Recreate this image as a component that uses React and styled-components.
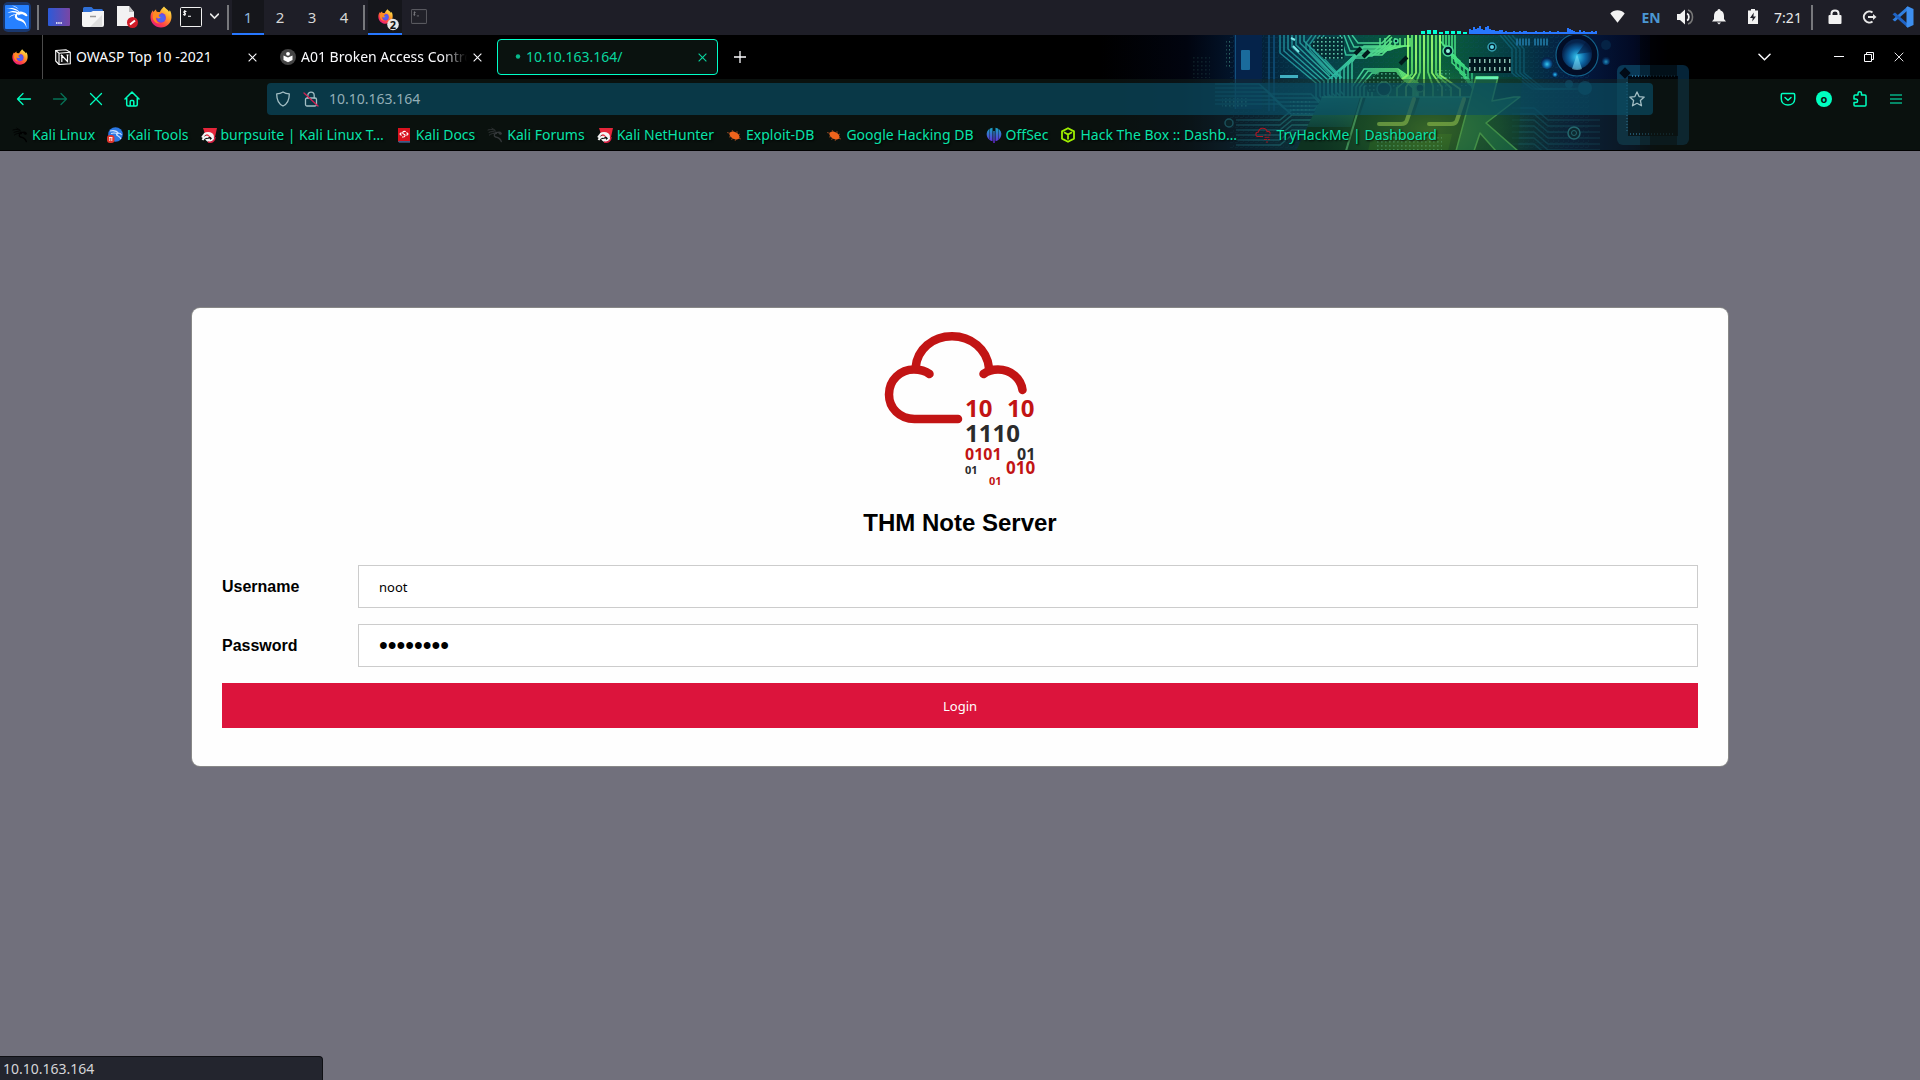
import React from "react";
import styled, { createGlobalStyle, css } from "styled-components";

const GlobalStyle = createGlobalStyle`
  *, *::before, *::after { box-sizing: border-box; }
  body { margin: 0; background: #71707c; font-family: "Noto Sans", sans-serif; }
  button, input { font: inherit; }
  a { color: inherit; text-decoration: none; }
`;

const uiText = css`
  font-size: 14px;
  line-height: 20px;
  white-space: nowrap;
`;

const Desktop = styled.div`
  min-height: 100vh;
  display: flex;
  flex-direction: column;
`;

/* ---------- system panel ---------- */

const Panel = styled.div`
  height: 35px;
  display: flex;
  justify-content: space-between;
  background: #1e1e27;
  color: #e8e8e8;
`;

const PanelGroup = styled.div`
  display: flex;
  align-items: stretch;
`;

const PanelCell = styled.button`
  ${uiText}
  width: ${(p) => p.$width || 26}px;
  padding: 0;
  border: 0;
  border-bottom: 2px solid ${(p) => (p.$active ? "#2777ff" : "transparent")};
  background: ${(p) => (p.$active ? "#15161b" : "transparent")};
  color: inherit;
  display: flex;
  align-items: center;
  justify-content: center;
`;

const WorkspaceCell = styled(PanelCell)`
  font-size: 15px;
  color: ${(p) => (p.$active ? "#8fb6dc" : "#d6d6d6")};
`;

const Separator = styled.span`
  width: 2px;
  margin: 5px ${(p) => p.$gap || 3}px;
  background: #77787c;
`;

const Language = styled.span`
  ${uiText}
  width: 34px;
  align-self: center;
  text-align: center;
  font-weight: 700;
  color: #4b97d2;
`;

const Clock = styled.time`
  ${uiText}
  width: 36px;
  align-self: center;
  display: flex;
  justify-content: center;
`;

const Graph = styled.svg`
  align-self: flex-end;
  margin: 0 3px 1px 0;
`;

/* ---------- browser chrome ---------- */

const Chrome = styled.header`
  position: relative;
  background: #000;
  border-bottom: 1px solid #000;
  overflow: hidden;
`;

const Artwork = styled.svg`
  position: absolute;
  top: 0;
  right: 200px;
`;

const TabBar = styled.div`
  position: relative;
  height: 44px;
  display: flex;
  align-items: center;
`;

const PinnedTab = styled.button`
  width: 43px;
  height: 44px;
  padding: 0 3px 0 0;
  margin-right: 4px;
  border: 0;
  border-right: 1px solid #4b4b4b;
  background: transparent;
  display: grid;
  place-items: center;
`;

const Tab = styled.div`
  ${uiText}
  width: 221px;
  height: 36px;
  margin-right: 4px;
  padding: 0 10px 0 7px;
  border: 1px solid ${(p) => (p.$active ? "#00ffc8" : "transparent")};
  border-radius: 4px;
  background: ${(p) => (p.$active ? "#0a120f" : "transparent")};
  color: ${(p) => (p.$active ? "#09d69f" : "#fbfbfe")};
  display: flex;
  align-items: center;
  gap: 5px;
`;

const TabTitle = styled.span`
  flex: 1;
  min-width: 0;
  overflow: hidden;
  ${(p) => p.$fade && css`mask-image: linear-gradient(90deg, #000 85%, transparent);`}
`;

const GlyphButton = styled.button`
  flex: none;
  width: ${(p) => p.$size || 36}px;
  height: ${(p) => p.$size || 36}px;
  padding: 0;
  border: 0;
  background: transparent;
  color: ${(p) => p.$color || "inherit"};
  opacity: ${(p) => (p.disabled ? 0.4 : 1)};
  display: grid;
  place-items: center;
`;

const TabClose = styled(GlyphButton)`
  width: 10px;
  height: 20px;
`;

const WindowButtons = styled.div`
  margin-left: auto;
  padding-right: 6px;
  display: flex;
  align-items: center;
  color: #fbfbfe;
`;

const WindowButton = styled(GlyphButton)`
  width: 30px;
  margin-left: ${(p) => (p.$apart ? 45 : 0)}px;
`;

const Toolbar = styled.div`
  position: relative;
  height: 40px;
  padding: 0 6px;
  display: flex;
  align-items: center;
  background: rgba(25, 43, 35, 0.4);
  color: #00ffc0;
`;

const AddressBar = styled.div`
  flex: 1;
  height: 32px;
  margin: 0 117px;
  padding: 0 7px 0 2px;
  border-radius: 4px;
  background: rgba(10, 78, 104, 0.64);
  color: #a3bec4;
  display: flex;
  align-items: center;
`;

const AddressInput = styled.input`
  ${uiText}
  flex: 1;
  min-width: 0;
  margin-left: 4px;
  padding: 0;
  border: 0;
  outline: 0;
  background: transparent;
  color: #93aeb6;
`;

const AddressIcon = styled.span`
  width: 28px;
  display: flex;
  justify-content: center;
`;

const Bookmarks = styled.nav`
  position: relative;
  height: 31px;
  padding: 0 12px;
  display: flex;
  align-items: center;
  gap: 12px;
  background: rgba(25, 43, 35, 0.4);
`;

const Bookmark = styled.a`
  ${uiText}
  min-width: ${(p) => p.$min || 0}px;
  display: flex;
  align-items: center;
  gap: 4px;
  color: #09e3a9;
  text-shadow: 1px 1px 2px #000;

  svg { flex: none; }
`;

/* ---------- page ---------- */

const Page = styled.main`
  flex: 1;
  padding: 157px 0;
`;

const Card = styled.section`
  width: 80%;
  margin: 0 auto;
  padding: 23px 30px 38px;
  border-radius: 8px;
  box-shadow: 0 0 0 1px #888;
  background: #fefefe;
  font-family: "Liberation Sans", Arial, sans-serif;
  display: flex;
  flex-direction: column;
  align-items: center;
`;

const Title = styled.h1`
  margin: 21px 0 28px;
  font-size: 24px;
  line-height: 28px;
  font-weight: 700;
  color: #000;
`;

const Form = styled.form`
  width: 100%;
  display: grid;
  gap: 16px;
`;

const Field = styled.div`
  display: grid;
  grid-template-columns: 136px 1fr;
  align-items: center;
`;

const Label = styled.label`
  font-size: 16px;
  line-height: 20px;
  font-weight: 700;
  color: #000;
`;

const TextInput = styled.input`
  width: 100%;
  height: 43px;
  padding: 0 20px;
  border: 1px solid #ccc;
  background: #fff;
  color: #000;
  font-family: "Noto Sans", sans-serif;
  font-size: 13px;
`;

const PasswordInput = styled(TextInput)`
  font-family: "Liberation Sans", sans-serif;
  font-size: 25px;
`;

const LoginButton = styled.button`
  height: 45px;
  padding: 0;
  border: 0;
  background: #dc143c;
  color: #fff;
  font-family: "Noto Sans", sans-serif;
  font-size: 13px;
`;

const StatusBar = styled.div`
  ${uiText}
  position: fixed;
  left: 0;
  bottom: 0;
  width: 323px;
  height: 24px;
  padding: 2px 3px;
  border: 1px solid #0f1014;
  border-width: 1px 1px 0 0;
  border-top-right-radius: 4px;
  background: #23252e;
  color: #d5d5d8;
`;

/* ---------- drawings ---------- */

const Firefox = ({ size }) => (
  <svg width={size} height={size} viewBox="0 0 22 22" aria-hidden="true">
    <defs>
      <linearGradient id="ffBody" x1="0.85" y1="0.1" x2="0.2" y2="1">
        <stop offset="0" stopColor="#ffe14a" />
        <stop offset="0.35" stopColor="#ff9a2a" />
        <stop offset="0.7" stopColor="#ff4146" />
        <stop offset="1" stopColor="#e31587" />
      </linearGradient>
    </defs>
    <path d="M14 .5c1 2 4 3.200 5 5.200.6-.3.7-1 .6-1.600 1.500 2 2 4.500 1.900 7.200C21.300 17 16.800 21.500 11 21.500S.5 17 .5 11.200c0-3 1-5.200 2.400-6.900 0 .8.2 1.300.5 1.700.8-1.200 2-2.200 2.700-2.500-.1 1 .2 2 .8 2.600 1-.3 2-.2 2.900.1C10.600 4 12.500 2 14 .5z" fill="url(#ffBody)" />
    <circle cx="11" cy="11.800" r="4.900" fill="#7542e5" />
    <circle cx="11.300" cy="12.200" r="3.600" fill="#5064f0" />
    <path d="M3.500 6c2-.8 3.800-.6 5.300.6h3c-.3 1.400-2.600 1.700-3 2.700 0 1.500 1 2 2.200 1.800-1 2-4.500 1.500-5 .2-.4 3 1.500 5.600 4.500 5.900C7 18 3 15.500 2.600 11z" fill="#ff8a22" />
  </svg>
);

const Dragon = ({ size, color }) => (
  <svg width={size} height={size} viewBox="0 0 24 24" fill="none" stroke={color} strokeLinecap="round" aria-hidden="true">
    <path d="M1.500 4.500C7 2.500 12 4 15 8.500M3 8c4-2 8-1.500 11 1M3.500 12c3-2.500 7-3 10-2" strokeWidth="1.300" />
    <path d="M14 8.500c3-1.200 5 0 6.500 2.500M17 8c2-1 4 .5 4.500 2l-3 .2" strokeWidth="1.800" />
    <path d="M14 9.500c-4 .5-4 4.500-1 5.500 4 .8 7 1.500 8.500 7" strokeWidth="2" />
    <path d="M7 1.500l5 3" strokeWidth="1" />
  </svg>
);

const KaliMenu = () => (
  <svg width="28" height="30" viewBox="0 0 28 30" aria-hidden="true">
    <rect width="28" height="30" rx="5" fill="#174aa0" opacity=".6" />
    <rect x="2" y="3" width="24" height="24" rx="1" fill="#2680ff" />
    <g fill="#fff">
      <path d="M3 6.500C9 5 15 6.500 17.500 11.500c-3-3-8-5-14.500-5z" />
      <path d="M4.500 11C9 8 14 8.500 17 11.500l-1.500 1C12.500 10 9 9.800 4.500 11z" />
      <path d="M5.500 16c2-3 5.500-4.200 9-3.500-3 .3-6 1.300-9 3.500z" />
      <path d="M15 10.500c2-1.500 4-1 5.500-.2 2 .3 3.500 1.700 4 3.700l-1.500.3-2.500-1.500c-2-.8-3.500-.5-5 .7z" />
      <path d="M16 11.500c-3 1.200-2.500 4 .5 4.800 4.500 1.200 7 4 7 9.700-1.200-4.500-3-6.500-8-7.500-4.500-1.500-5-6.500-.5-8z" />
      <path d="M9 3.500c3 .5 5 1.500 6.500 3.500C13 5.500 11 4.500 9 3.500z" />
    </g>
  </svg>
);

const Terminal = ({ small }) => (
  <svg width={small ? 16 : 22} height={small ? 15 : 20} viewBox="0 0 22 20" opacity={small ? 0.42 : 1} aria-hidden="true">
    <rect x=".5" y=".5" width="21" height="19" rx="1" fill={small ? "#26272d" : "#16171c"} stroke="#f1f1f1" />
    <path d="M6.500 4.500C4 3.700 3 5.300 4.500 6S6 8.200 3 7.500M4.800 3v6M8 9.200h3" fill="none" stroke="#fff" strokeWidth="1.100" />
  </svg>
);

const Cross = ({ size = 10, thin }) => (
  <svg width={size} height={size} viewBox="0 0 10 10" aria-hidden="true">
    <path d="M.7.7l8.600 8.600M9.300.7L.7 9.300" stroke="currentColor" strokeWidth={thin ? 0.9 : 1.2} fill="none" />
  </svg>
);

const Chevron = ({ width = 12, weight = 1.5 }) => (
  <svg width={width} height={width / 2 + 2} viewBox="0 0 12 8" fill="none" stroke="currentColor" strokeWidth={weight} aria-hidden="true">
    <path d="M.8 1.200L6 6.400l5.200-5.200" strokeLinecap="round" />
  </svg>
);

const Stroke = ({ children, size = 16, weight = 1.3 }) => (
  <svg width={size} height={size} viewBox="0 0 16 16" fill="none" stroke="currentColor" strokeWidth={weight} strokeLinecap="round" strokeLinejoin="round" aria-hidden="true">
    {children}
  </svg>
);

const NetHunterMark = () => (
  <svg width="16" height="16" viewBox="0 0 16 16" aria-hidden="true">
    <path d="M2 1h14l-2 9H5z" fill="#e5263a" />
    <path d="M13.500 12.500L8 7c-3-2-5 .5-7 3.500M3 7c4-2 9-1 9 3s-4 5-6 3l3-.5M1.500 13c1-2 3-4 6-3" fill="none" stroke="#f4f4f4" strokeWidth="1.900" />
    <path d="M7 15c4 1 7-1 7-5" fill="none" stroke="#d81f42" strokeWidth="1.500" />
  </svg>
);

const Beetle = () => (
  <svg width="16" height="16" viewBox="0 0 16 16" aria-hidden="true">
    <path d="M1 5.500l4 1M3 10l3-.5M6 3l2 3M5 12.500l3-1.500M11 4l0 3M9 14l1-2M14 7l-2 1M15 12l-3-1" stroke="#80421e" strokeWidth="1" />
    <ellipse cx="8.500" cy="8.500" rx="5.500" ry="3.400" transform="rotate(28 8.500 8.500)" fill="#f0641c" />
  </svg>
);

const KaliToolsMark = () => (
  <svg width="16" height="16" viewBox="0 0 16 16" aria-hidden="true">
    <circle cx="8.500" cy="7.500" r="7.300" fill="#2b78e4" />
    <path d="M3 4c4-1 7 0 8.500 2.500M4 6.500c3-1 5-.5 7 .5M11 6.500c1.500-.5 3 .5 3.500 1.500M10 7c-2 1.500 3 1.500 4 5" stroke="#cfe2ff" fill="none" strokeWidth="1.100" />
    <rect y="8" width="7.500" height="8" rx="3" fill="#e1352c" />
    <path d="M2 10.500h3.500M2.800 11v3M4.800 11v3" stroke="#fff" strokeWidth=".9" />
  </svg>
);

const DocsMark = () => (
  <svg width="16" height="16" viewBox="0 0 16 16" aria-hidden="true">
    <path d="M2 1h12v14H2z" fill="#d8121e" />
    <path d="M2 14h12v1.800H3z" fill="#3f5c88" />
    <path d="M5.500 5.500L4 7l1.500 1.500M10.500 5.500L12 7l-1.500 1.500M9.800 4.500C6 3.800 6 6.800 8 7.200s1 3.300-2 2.800" stroke="#fff" fill="none" strokeWidth="1.100" />
  </svg>
);

const OffSecMark = () => (
  <svg width="16" height="16" viewBox="0 0 16 16" aria-hidden="true">
    <defs><linearGradient id="offsec" x2="0" y2="1"><stop stopColor="#16a6c4" /><stop offset="1" stopColor="#6b22dd" /></linearGradient></defs>
    <path d="M6.500.8v13.500C2 13 .5 9.500.7 6.500S3 1.500 6.500.8zM9.500.8v13.500c4.500-1.300 6-4.800 5.800-7.800S13 1.500 9.500.8zM7.300 4h1.400v12H7.300z" fill="url(#offsec)" />
    <path d="M3.500 1.500v11M12.500 1.500v11" stroke="#0a120f" strokeWidth=".4" />
  </svg>
);

const HtbMark = () => (
  <svg width="16" height="16" viewBox="0 0 16 16" fill="none" stroke="#9fef00" strokeWidth="1.800" strokeLinejoin="round" aria-hidden="true">
    <path d="M8 1.200l6 3.200v7.200L8 14.800l-6-3.200V4.400zM4 5.200l4 2.400 4-2.400M8 7.600v5" />
  </svg>
);

const ThmMark = () => (
  <svg width="17" height="16" viewBox="0 0 17 16" fill="none" stroke="#b01522" strokeWidth="1.100" aria-hidden="true">
    <path d="M8 9.500H3C.2 9.500 0 5 3.500 5 4 0 11 0 12 4.500c2-.5 3 .5 3.300 2.200" />
    <path d="M9.500 8h2M13.500 8h2M9 12.500h3M13 12.500h2M11 15h2M9.500 10.300h5" strokeWidth=".9" />
  </svg>
);

const LoginLogo = () => (
  <svg width="154" height="157" viewBox="-2 -1 154 157" role="img" aria-label="TryHackMe">
    <g fill="none" stroke="#c21414" strokeWidth="8.500" strokeLinecap="round">
      <path d="M73 87H29.500C14.500 87 4 76 4 62.500 4 48 15.500 37.500 29 37.500c6.500 0 11.500 1.500 15.500 4.500" />
      <path d="M30.500 36C32 17 48 4.300 67 4.300S102 17 104 36" />
      <path d="M98.500 42c4-3 9.500-4.500 14.500-4.500 13 0 23 9 24.500 20.500" />
    </g>
    <g fontFamily="Noto Sans, sans-serif" fontWeight="700">
      <g fill="#c21414" fontSize="24">
        <text x="80" y="85">10</text>
        <text x="122" y="85">10</text>
      </g>
      <text x="80" y="110" fontSize="24" fill="#2b2b2b">1110</text>
      <text x="80" y="128" fontSize="16" fill="#c21414">0101</text>
      <text x="132" y="128" fontSize="16" fill="#2b2b2b">01</text>
      <text x="80" y="142" fontSize="11" fill="#2b2b2b">01</text>
      <text x="121" y="142" fontSize="17" fill="#c21414">010</text>
      <text x="104" y="153" fontSize="11" fill="#c21414">01</text>
    </g>
  </svg>
);

const range = (n) => Array.from({ length: n }, (_, i) => i);

const CircuitArt = () => (
  <Artwork width="620" height="116" viewBox="1100 35 620 116" aria-hidden="true">
    <defs>
      <linearGradient id="board" gradientUnits="userSpaceOnUse" x1="1100" x2="1720" y1="0" y2="0">
        <stop offset="0" stopColor="#000" />
        <stop offset="0.14" stopColor="#01040f" />
        <stop offset="0.24" stopColor="#031a34" />
        <stop offset="0.34" stopColor="#063a4c" />
        <stop offset="0.44" stopColor="#06503f" />
        <stop offset="0.54" stopColor="#0a6238" />
        <stop offset="0.64" stopColor="#064444" />
        <stop offset="0.76" stopColor="#041c44" />
        <stop offset="0.86" stopColor="#020a24" />
        <stop offset="0.92" stopColor="#000" />
        <stop offset="1" stopColor="#000" />
      </linearGradient>
      <linearGradient id="trace" gradientUnits="userSpaceOnUse" x1="1180" x2="1640" y1="0" y2="0">
        <stop offset="0" stopColor="#06263e" />
        <stop offset="0.2" stopColor="#197a90" />
        <stop offset="0.34" stopColor="#2db7a0" />
        <stop offset="0.5" stopColor="#6cf57c" />
        <stop offset="0.62" stopColor="#3bdc84" />
        <stop offset="0.7" stopColor="#128098" />
        <stop offset="1" stopColor="#082c50" />
      </linearGradient>
      <radialGradient id="glow" gradientUnits="userSpaceOnUse" cx="1430" cy="130" r="120" gradientTransform="matrix(1 0 0 .6 0 52)">
        <stop offset="0" stopColor="#93e03a" stopOpacity=".5" />
        <stop offset="0.6" stopColor="#3faa3a" stopOpacity=".3" />
        <stop offset="1" stopColor="#0a5a3a" stopOpacity="0" />
      </radialGradient>
      <radialGradient id="knob" cx=".5" cy=".6">
        <stop offset="0" stopColor="#35c7f0" />
        <stop offset="0.55" stopColor="#0c62a0" />
        <stop offset="1" stopColor="#06234c" />
      </radialGradient>
      <linearGradient id="slab" x2="0" y2="1">
        <stop offset="0" stopColor="#1c9a84" />
        <stop offset="1" stopColor="#0a5148" />
      </linearGradient>
      <pattern id="pads" width="4" height="4" patternUnits="userSpaceOnUse">
        <rect x="1" y="1" width="1.600" height="1.600" fill="#6fe6c0" />
      </pattern>
      <pattern id="mesh" width="5" height="5" patternUnits="userSpaceOnUse">
        <path d="M0 2.500h3M3.500 0v2" stroke="#10506a" strokeWidth=".6" />
      </pattern>
    </defs>
    <rect x="1100" y="35" width="620" height="116" fill="url(#board)" />
    <rect x="1230" y="35" width="360" height="116" fill="url(#mesh)" opacity=".4" />

    <g>
      <rect x="1234" y="35" width="28" height="74" fill="#05234a" />
      <rect x="1268" y="35" width="2" height="76" fill="#0d476e" />
      <rect x="1273" y="35" width="2" height="76" fill="#0d476e" />
      <rect x="1241" y="50" width="9" height="20" rx="1" fill="#1a6b9c" />
      <rect x="1235" y="35" width="1" height="74" fill="#12507c" />
      <rect x="1226" y="40" width="4" height="28" fill="url(#pads)" opacity=".4" />
      <rect x="1192" y="56" width="18" height="22" fill="url(#pads)" opacity=".1" />
    </g>

    <g fill="none" stroke="url(#trace)" strokeWidth="1.500">
      {range(7).map((i) => (
        <path key={i} d={`M${1280 + i * 4} 35v${18 - i * 2}l${36} ${30 + i}v${14}l4 4`} />
      ))}
      {range(4).map((i) => (
        <path key={i} d={`M${1312 + i * 4} 35l-6 ${8 + i}v${6}l${24} 26`} opacity=".8" />
      ))}
      {range(7).map((i) => (
        <path key={i} d={`M${1328 + i * 4} 110V${80 - i * 3}l${24 - i * 2}-${22 - i}h${14 + i * 4}l${14 - i} ${-12 + i * 2}v-8`} />
      ))}
      {range(6).map((i) => (
        <path key={i} d={`M${1352 + i * 4} 98V${87}l12-${18 - i * 2}h${34 - i * 3}l${20 - i * 2} ${14 - i}v16`} />
      ))}
      {range(4).map((i) => (
        <path key={i} d={`M${1352 - i * 4} 35l6 ${8 + i * 4}h${24 + i * 4}l10-10`} />
      ))}
      {range(6).map((i) => (
        <path key={i} d={`M${1440 + i * 3} 35v${6 + i * 4}l${12 + i} 12v${10 + i}l14 12`} />
      ))}
      {range(6).map((i) => (
        <path key={i} d={`M1215 ${84 + i * 4}h${44 + i * 4}l12 10h40l14 14`} opacity=".85" />
      ))}
      {range(6).map((i) => (
        <path key={i} d={`M1236 ${120 + i * 5}h44l12-10h22l12-12`} opacity=".8" />
      ))}
      {range(4).map((i) => (
        <path key={i} d={`M${1500 + i * 4} 35l12 14v24l20 16h40`} opacity=".45" />
      ))}
      {range(7).map((i) => (
        <path key={i} d={`M1512 ${108 + i * 6}h22l14 12h52`} opacity=".6" />
      ))}
    </g>
    <g fill="none" strokeWidth="1.800">
      {range(9).map((i) => (
        <path key={i} d={`M${1408 + i * 4} 35v${36 + Math.abs(i - 4)}l${(i - 4) * 5} ${14}v12`} stroke={i % 2 ? "#5fe06c" : "#9bff74"} />
      ))}
    </g>

    <path d="M1310 45l8-8h26v22h-20z" fill="#042c33" />
    <path d="M1310 45l8-8h26v22h-20z" fill="url(#pads)" opacity=".8" />
    <path d="M1364 82l16-10h16l8 10-16 10h-20z" fill="#053a28" />
    <path d="M1364 82l16-10h16l8 10-16 10h-20z" fill="url(#pads)" opacity=".6" />
    <path d="M1290 100h20v14h-20zM1222 98h26v9h-26zM1436 70h14v22h-14zM1460 74h8v12h-8z" fill="url(#pads)" opacity=".5" />
    <rect x="1280" y="75" width="18" height="3" fill="#4fd0e0" opacity=".8" />
    <path d="M1291 38l4 2M1293 46l6 6" stroke="#7fe9ea" strokeWidth="2" />
    <path d="M1355 54l6-6M1363 57l6-6M1400 64l7-7" stroke="#01191b" strokeWidth="4" />

    <g fill="#021f2c" stroke="#50dd9c" strokeWidth="1.500">
      <circle cx="1448" cy="51" r="5" />
      <circle cx="1492" cy="47" r="4" stroke="#35a3b5" />
      <circle cx="1396" cy="41" r="2" />
      <circle cx="1384" cy="89" r="7" stroke="#389c83" />
      <circle cx="1420" cy="88" r="4" stroke="#55bd63" />
      <circle cx="1229" cy="123" r="4" stroke="#1b6a80" />
    </g>
    <circle cx="1448" cy="51" r="2" fill="#8ff5d8" />
    <circle cx="1492" cy="47" r="2" fill="#5cd3e4" />
    <rect x="1469" y="57" width="42" height="16" fill="#01161e" />
    <path d="M1469 61h42M1469 69h42" stroke="#b6f7df" strokeWidth="4" strokeDasharray="1.500 3.500" opacity=".75" />
    <path d="M1516 42h15M1534 42h14" stroke="#1b6b93" strokeWidth="7" strokeDasharray="2 1" />

    <g>
      <circle cx="1577" cy="55" r="21" fill="#020d26" stroke="#12618a" strokeWidth="1.200" />
      <circle cx="1577" cy="54" r="15" fill="url(#knob)" />
      <path d="M1577 54l-5 15a15 15 0 0 0 10 0z" fill="#7bdcf4" opacity=".55" />
      <path d="M1577 54l9-12a15 15 0 0 1 6 10z" fill="#03173c" opacity=".55" />
      <circle cx="1547" cy="63" r="6" fill="url(#knob)" />
      <circle cx="1555" cy="74" r="3" fill="url(#knob)" />
      <circle cx="1606" cy="61" r="4" fill="url(#knob)" opacity=".7" />
      <circle cx="1606" cy="45" r="5" fill="#052345" />
      <circle cx="1585" cy="88" r="7" fill="#0b4a74" />
      <circle cx="1569" cy="84" r="4" fill="#0b4a74" />
      <circle cx="1574" cy="133" r="6" fill="#06283a" stroke="#2d90a0" strokeWidth="1.500" />
      <circle cx="1574" cy="133" r="2.500" fill="none" stroke="#2d90a0" />
    </g>

    <rect x="1617" y="65" width="72" height="80" rx="6" fill="#093856" />
    <rect x="1628" y="76" width="50" height="60" fill="#010a16" />
    <path d="M1632 76h44M1630 134h44M1627 82v50" stroke="#256c94" strokeWidth="2" strokeDasharray="1 2" />
    <rect x="1621" y="69" width="8" height="8" fill="#010a16" transform="rotate(45 1625 73)" />
    <rect x="1640" y="35" width="10" height="116" fill="#000" opacity=".35" />
    <rect x="1650" y="35" width="27" height="116" fill="#000" opacity=".7" />
    <rect x="1677" y="35" width="12" height="116" fill="#000" opacity=".35" />

    <g strokeLinejoin="round">
      <path d="M1322 97h154l-16 54h-164z" fill="#07381f" />
      <path d="M1476 77h46l-4 74h-62z" fill="#07402c" opacity=".6" />
      <path d="M1322 97h38l-9 30h-44zM1366 97h48l-6 18h-48zM1420 97h46l-6 18h-46z" fill="url(#slab)" />
      <path d="M1322 97h152" stroke="#3fd0a0" strokeWidth="1.500" />
      <path d="M1362 97l-16 54" stroke="#63d884" strokeWidth="2" />
      <path d="M1476 77h22l-6 24 22-4h6l-34 26 32 28h-22l-16-18-6 18h-18z" fill="#137a56" stroke="#64e072" strokeWidth="1.500" />
      <path d="M1476 78h22" stroke="#6dffc0" strokeWidth="3" />
      <path d="M1414 99l-7 21q-1 4-6 4h-22M1464 99l-7 21q-1 4-6 4h-22" fill="none" stroke="#b4e860" strokeWidth="4" strokeLinecap="round" />
      <path d="M1372 134h80l-4 17h-80z" fill="#1c5a1c" />
      <path d="M1376 137h66v14h-66z" fill="url(#pads)" opacity=".7" />
      <rect x="1290" y="60" width="260" height="91" fill="url(#glow)" />
    </g>
  </Artwork>
);

const netLoad = [5, 4, 7, 5, 6, 8, 5, 4, 7, 8, 5, 4, 4, 3, 3, 4, 4, 2, 3, 2, 2, 2, 3, 2, 2, 3, 2, 3, 3, 2, 2, 2, 2, 3, 2, 2, 2, 3, 2, 2, 3, 2, 2, 2, 3, 2, 2, 2, 2, 6, 5, 4, 3, 2, 2, 4, 2, 3, 2, 2, 2, 3, 2, 3];
const cpuLoad = [3, 4, 4, 2, 3, 3, 3, 2];

const LoadGraph = () => (
  <Graph width="176" height="10" viewBox="0 0 176 10" aria-hidden="true">
    {cpuLoad.map((h, i) => <rect key={i} x={i * 6} y={10 - h} width="4" height={h} fill="#00ffd5" />)}
    {netLoad.map((h, i) => <rect key={i} x={48 + i * 2} y={10 - h} width="2" height={h} fill="#2777ff" />)}
  </Graph>
);

const bookmarks = [
  { label: "Kali Linux", icon: <Dragon size={16} color="#000" /> },
  { label: "Kali Tools", icon: <KaliToolsMark /> },
  { label: "burpsuite | Kali Linux T…", icon: <NetHunterMark />, min: 183 },
  { label: "Kali Docs", icon: <DocsMark /> },
  { label: "Kali Forums", icon: <Dragon size={16} color="#34383a" /> },
  { label: "Kali NetHunter", icon: <NetHunterMark /> },
  { label: "Exploit-DB", icon: <Beetle /> },
  { label: "Google Hacking DB", icon: <Beetle /> },
  { label: "OffSec", icon: <OffSecMark /> },
  { label: "Hack The Box :: Dashb…", icon: <HtbMark />, min: 183 },
  { label: "TryHackMe | Dashboard", icon: <ThmMark /> },
];

const SystemPanel = () => (
  <Panel>
    <PanelGroup>
      <PanelCell $width={34} aria-label="Applications"><KaliMenu /></PanelCell>
      <Separator />
      <PanelCell $width={34} aria-label="Show desktop">
        <svg width="22" height="18" viewBox="0 0 22 18">
          <defs><linearGradient id="desk" x2="1"><stop stopColor="#2c5ad8" /><stop offset="1" stopColor="#7a46a4" /></linearGradient></defs>
          <rect width="22" height="18" rx="1" fill="url(#desk)" />
          <path d="M8 15h6" stroke="#fff" strokeWidth="1.600" strokeDasharray="1.500 .7" />
        </svg>
      </PanelCell>
      <PanelCell $width={34} aria-label="Files">
        <svg width="22" height="20" viewBox="0 0 22 20">
          <path d="M1 1.500Q1 0 2.500 0h7l2 2h8Q21 2 21 4v3H1z" fill="#2f6fd6" />
          <path d="M0 5h9l2-1h11v14q0 2-2 2H2q-2 0-2-2z" fill="#f5f5f5" />
          <path d="M20 8v12H8z" fill="#dedede" />
          <path d="M8 9.500h6" stroke="#999" strokeWidth="1.500" />
        </svg>
      </PanelCell>
      <PanelCell $width={34} aria-label="Text editor">
        <svg width="21" height="22" viewBox="0 0 21 22">
          <path d="M0 0h12l5 6v14H0z" fill="#f2f2f2" />
          <path d="M12 0v6h5z" fill="#bcbcbc" />
          <circle cx="15.500" cy="16.500" r="5.500" fill="#d01c28" />
          <path d="M13 18.500l5-4" stroke="#fff" strokeWidth="2" />
        </svg>
      </PanelCell>
      <PanelCell $width={34} aria-label="Firefox"><Firefox size={22} /></PanelCell>
      <PanelCell aria-label="Terminal"><Terminal /></PanelCell>
      <PanelCell $width={20} aria-label="More terminals"><Chevron width={9} weight={2.2} /></PanelCell>
      <Separator />
      {[1, 2, 3, 4].map((n) => (
        <WorkspaceCell key={n} $width={32} $active={n === 1}>{n}</WorkspaceCell>
      ))}
      <Separator />
      <PanelCell $width={34} $active aria-label="Firefox windows">
        <svg width="28" height="30" viewBox="0 0 28 30">
          <g transform="translate(7 7)"><Firefox size={15} /></g>
          <circle cx="22" cy="22.500" r="5.800" fill="#e6e6e6" />
          <text x="22" y="26.500" textAnchor="middle" fontSize="11" fontWeight="700" fontFamily="Noto Sans, sans-serif" fill="#111">2</text>
        </svg>
      </PanelCell>
      <PanelCell $width={34} aria-label="Terminal window"><Terminal small /></PanelCell>
    </PanelGroup>
    <PanelGroup>
      <LoadGraph />
      <PanelCell $width={34} aria-label="Network">
        <svg width="15" height="13" viewBox="0 0 15 13"><path d="M.3 3.500C4-.8 11-.8 14.700 3.500L7.500 12.800z" fill="#f2f2f2" /></svg>
      </PanelCell>
      <Language>EN</Language>
      <PanelCell $width={34} aria-label="Volume">
        <svg width="18" height="16" viewBox="0 0 18 16">
          <path d="M1 5h3l5-4.500v15L4 11H1z" fill="#f2f2f2" />
          <path d="M11 4.500c2.500 1 2.500 6 0 7" fill="none" stroke="#f2f2f2" strokeWidth="1.800" />
          <path d="M12 1c6 2 6 12 0 14" fill="none" stroke="#777" strokeWidth="1.600" />
        </svg>
      </PanelCell>
      <PanelCell $width={34} aria-label="Notifications">
        <svg width="14" height="16" viewBox="0 0 14 16"><path d="M7 0c1 0 1.500.8 1.500 1.500C11 2.300 12 4.500 12 7v3l2 2.500H0L2 10V7c0-2.500 1-4.700 3.500-5.500C5.500.8 6 0 7 0zM5 13.500h4L7 15.500z" fill="#f2f2f2" /></svg>
      </PanelCell>
      <PanelCell $width={34} aria-label="Battery">
        <svg width="10" height="15" viewBox="0 0 10 15"><path d="M3 0h4v1.500h3V15H0V1.500h3z" fill="#f2f2f2" /><path d="M5.800 3.500L2 9h2.700l-.5 3.500L8 7.500H5.400z" fill="#1e1e27" /></svg>
      </PanelCell>
      <Clock>7:21</Clock>
      <Separator $gap={5} />
      <PanelCell $width={34} aria-label="Lock screen">
        <svg width="14" height="15" viewBox="0 0 14 15"><path d="M3.500 7V4.500c0-4 7-4 7 0V7" fill="none" stroke="#f2f2f2" strokeWidth="2" /><rect x=".5" y="6" width="13" height="9" rx="1" fill="#f2f2f2" /></svg>
      </PanelCell>
      <PanelCell $width={34} aria-label="Log out">
        <svg width="15" height="14" viewBox="0 0 15 14" fill="none" stroke="#e9e9e9" strokeWidth="2"><path d="M10.500 2.500a5.500 5.500 0 1 0 0 9M6 7h6" /><path d="M11 4l3.500 3L11 10z" fill="#e9e9e9" stroke="none" /></svg>
      </PanelCell>
      <PanelCell $width={34} aria-label="Visual Studio Code">
        <svg width="22" height="22" viewBox="0 0 22 22">
          <path d="M15.500 4.500L3 15.500l-2.500-1.700L15.500.5z" fill="#2f7fe0" />
          <path d="M15.500 17.500L3 6.500.5 8.200l15 13.300z" fill="#2063c4" />
          <path d="M15.500.3L21.500 3v16l-6 2.700-1-1.200V1.500z" fill="#3d8ff0" />
        </svg>
      </PanelCell>
    </PanelGroup>
  </Panel>
);

const BrowserChrome = () => (
  <Chrome>
    <CircuitArt />
    <TabBar>
      <PinnedTab aria-label="Firefox View"><Firefox size={16} /></PinnedTab>
      <Tab>
        <svg width="16" height="16" viewBox="0 0 16 16" aria-hidden="true">
          <path d="M.7 1.500L11 .7l4.300 2.600v11.400L4 15.500.7 12z" fill="#111" stroke="#fff" strokeWidth="1.100" />
          <path d="M.7 1.500L4 4.200l11.300-.9M4 4.200v11.300" stroke="#fff" strokeWidth="1.100" fill="none" />
          <path d="M6.800 13V6.500l5.700 6V6M5.800 6.500h2M11.500 6h2" stroke="#fff" strokeWidth="1.200" fill="none" />
        </svg>
        <TabTitle>OWASP Top 10 -2021</TabTitle>
        <TabClose aria-label="Close tab"><Cross size={9} /></TabClose>
      </Tab>
      <Tab>
        <svg width="16" height="16" viewBox="0 0 16 16" aria-hidden="true">
          <circle cx="8" cy="8" r="8" fill="#454545" />
          <circle cx="8" cy="4.800" r="1.900" fill="#fff" />
          <path d="M3.500 6.500L8 8.500l4.500-2V11L8 13.300 3.500 11z" fill="#fff" />
        </svg>
        <TabTitle $fade>A01 Broken Access Control</TabTitle>
        <TabClose aria-label="Close tab"><Cross size={9} /></TabClose>
      </Tab>
      <Tab $active>
        <svg width="16" height="16" viewBox="0 0 16 16" aria-hidden="true"><circle cx="13" cy="7.500" r="2.200" fill="#08b98b" /></svg>
        <TabTitle>10.10.163.164/</TabTitle>
        <TabClose aria-label="Close tab"><Cross size={9} /></TabClose>
      </Tab>
      <GlyphButton $color="#fbfbfe" aria-label="New tab">
        <svg width="12" height="12" viewBox="0 0 12 12"><path d="M6 0v12M0 6h12" stroke="currentColor" strokeWidth="1.300" /></svg>
      </GlyphButton>
      <WindowButtons>
        <WindowButton aria-label="List all tabs"><Chevron width={13} weight={1.4} /></WindowButton>
        <WindowButton $apart aria-label="Minimize"><svg width="10" height="2"><rect width="10" height="1" fill="currentColor" /></svg></WindowButton>
        <WindowButton aria-label="Restore">
          <svg width="10" height="10" viewBox="0 0 10 10" fill="none" stroke="currentColor"><path d="M.5 2.500h7v7h-7zM2.500 2.500v-2h7v7h-2" /></svg>
        </WindowButton>
        <WindowButton aria-label="Close window"><Cross thin /></WindowButton>
      </WindowButtons>
    </TabBar>
    <Toolbar>
      <GlyphButton aria-label="Back"><Stroke><path d="M1.500 8h13M7 2.500L1.500 8 7 13.500" /></Stroke></GlyphButton>
      <GlyphButton disabled aria-label="Forward"><Stroke><path d="M14.500 8h-13M9 2.500L14.500 8 9 13.500" /></Stroke></GlyphButton>
      <GlyphButton aria-label="Stop"><Stroke><path d="M2.500 2.500l11 11M13.500 2.500l-11 11" /></Stroke></GlyphButton>
      <GlyphButton aria-label="Home"><Stroke weight={1.5}><path d="M1 8l7-7 7 7M2.700 7v6.500q0 1.500 1.500 1.500h7.600q1.500 0 1.500-1.500V7M6.200 15v-4.500q0-1 1-1h1.600q1 0 1 1V15" /></Stroke></GlyphButton>
      <AddressBar>
        <AddressIcon><Stroke><path d="M8 1c2 1.300 4 1.800 6.300 1.900 0 6-1.500 9.800-6.300 12.100C3.200 12.700 1.700 8.900 1.700 2.900 4 2.800 6 2.300 8 1z" /></Stroke></AddressIcon>
        <AddressIcon>
          <Stroke><rect x="2.500" y="7" width="11" height="8" rx="1.500" /><path d="M4.800 7V4.500c0-4.500 6.400-4.500 6.400 0V7" /><path d="M1 2l14 13" stroke="#d61f52" /></Stroke>
        </AddressIcon>
        <AddressInput aria-label="Address" defaultValue="10.10.163.164" />
        <GlyphButton $size={18} aria-label="Bookmark this page"><Stroke><path d="M8 .9l2.100 4.700 5.100.5-3.800 3.500 1.100 5.200L8 12.200l-4.500 2.600 1.100-5.200L.8 6.100l5.100-.5z" /></Stroke></GlyphButton>
      </AddressBar>
      <GlyphButton aria-label="Save to Pocket"><Stroke weight={1.5}><path d="M2.500 2.500h11q1.200 0 1.200 1.200V8c0 8-13.400 8-13.400 0V3.700q0-1.200 1.200-1.200zM5 6.500L8 9.300l3-2.800" /></Stroke></GlyphButton>
      <GlyphButton aria-label="Account">
        <svg width="16" height="16" viewBox="0 0 16 16"><circle cx="8" cy="8" r="8" fill="currentColor" /><text x="8" y="11.500" textAnchor="middle" fontSize="11" fontWeight="700" fontFamily="Noto Sans, sans-serif" fill="#0a120f">o</text></svg>
      </GlyphButton>
      <GlyphButton aria-label="Extensions"><Stroke weight={1.5}><path d="M2 6.500V5q0-1 1-1h3V2.500c0-2.200 3.500-2.200 3.500 0V4H13q1 0 1 1v9q0 1-1 1H3q-1 0-1-1v-2.500h2c2.200 0 2.200-3.500 0-3.500H2z" /></Stroke></GlyphButton>
      <GlyphButton aria-label="Open menu">
        <svg width="12" height="10" viewBox="0 0 12 10"><path d="M0 1h12M0 5h12M0 9h12" stroke="currentColor" strokeWidth="1.200" /></svg>
      </GlyphButton>
    </Toolbar>
    <Bookmarks aria-label="Bookmarks">
      {bookmarks.map((b) => (
        <Bookmark key={b.label} href="#" $min={b.min}>{b.icon}{b.label}</Bookmark>
      ))}
    </Bookmarks>
  </Chrome>
);

export default function App() {
  return (
    <Desktop>
      <GlobalStyle />
      <SystemPanel />
      <BrowserChrome />
      <Page>
        <Card>
          <LoginLogo />
          <Title>THM Note Server</Title>
          <Form onSubmit={(e) => e.preventDefault()}>
            <Field>
              <Label htmlFor="username">Username</Label>
              <TextInput id="username" type="text" defaultValue="noot" />
            </Field>
            <Field>
              <Label htmlFor="password">Password</Label>
              <PasswordInput id="password" type="password" defaultValue="password" />
            </Field>
            <LoginButton type="submit">Login</LoginButton>
          </Form>
        </Card>
      </Page>
      <StatusBar>10.10.163.164</StatusBar>
    </Desktop>
  );
}
